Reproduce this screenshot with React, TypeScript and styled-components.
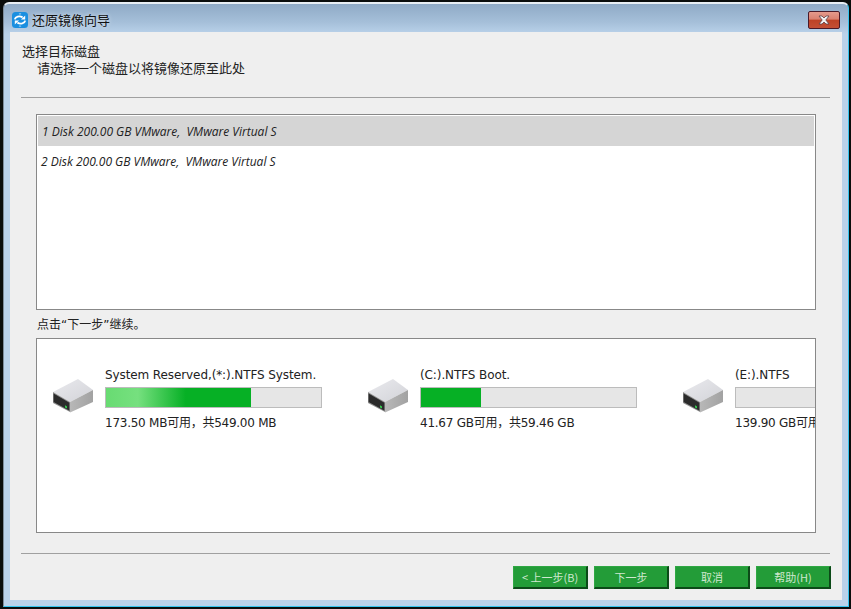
import React from "react";
import styled, { createGlobalStyle } from "styled-components";

const GlobalStyle = createGlobalStyle`
  html, body {
    margin: 0;
    padding: 0;
    background: #0a0d0c;
  }
  * {
    box-sizing: border-box;
  }
`;

const Desktop = styled.div`
  width: 851px;
  height: 609px;
  padding: 2px 2px 2px 3px;
  background: #0a0d0c;
  overflow: hidden;
  font-family: "DejaVu Sans", "Noto Sans CJK SC", sans-serif;
  font-size: 12px;
  color: #222;
`;

const Frame = styled.div`
  width: 846px;
  height: 605px;
  display: flex;
  flex-direction: column;
  padding: 0 6px 6px 6px;
  border-radius: 6px 6px 0 0;
  border-top: 2px solid #e8eef4;
  border-right: 1px solid #35c4ee;
  border-bottom: 1px solid #35c4ee;
  border-left: 1px solid #7d8d9c;
  background: linear-gradient(180deg, #8faac6 0px, #a5bfd9 18px, #bad2ea 30px, #bad2ea 100%);
`;

const TitleBar = styled.div`
  height: 28px;
  flex: none;
  display: flex;
  align-items: center;
  gap: 4px;
  padding: 4px 0 0 2px;
`;

const AppIcon = styled.svg`
  width: 16px;
  height: 16px;
  flex: none;
`;

const Title = styled.div`
  flex: 1;
  font-family: "Noto Sans CJK SC", sans-serif;
  font-size: 13px;
  line-height: 16px;
  color: #111;
  text-shadow: 0 0 4px rgba(255, 255, 255, 0.7);
`;

const CloseButton = styled.div`
  width: 32px;
  height: 18px;
  margin-right: 2px;
  display: flex;
  align-items: center;
  justify-content: center;
  border: 1px solid #4a1a28;
  border-radius: 2px;
  background: linear-gradient(180deg, #e59a8c 0%, #d9806f 45%, #bd4226 50%, #c34f35 100%);
`;

const Panel = styled.div`
  flex: 1;
  display: flex;
  flex-direction: column;
  background: #efefef;
  padding: 10px 11px 0;
`;

const Heading = styled.div`
  font-family: "Noto Sans CJK SC", sans-serif;
  font-size: 13px;
  line-height: 17px;
  padding-left: 1px;
`;

const SubHeading = styled(Heading)`
  padding-left: 16px;
`;

const Divider = styled.div`
  height: 1px;
  flex: none;
  width: 809px;
  background: #a0a0a0;
`;

const TopDivider = styled(Divider)`
  margin-top: 21px;
`;

const BottomDivider = styled(Divider)`
  margin-top: 20px;
`;

const DiskList = styled.div`
  width: 780px;
  height: 196px;
  flex: none;
  margin: 16px 0 0 15px;
  padding: 1px;
  background: #fff;
  border: 1px solid #888;
`;

const DiskRow = styled.div<{ $selected?: boolean }>`
  height: 30px;
  display: flex;
  align-items: center;
  padding-left: ${(p) => (p.$selected ? "4px" : "3px")};
  background: ${(p) => (p.$selected ? "#d5d5d5" : "#fff")};
  font-family: "Open Sans", sans-serif;
  font-style: italic;
  font-size: 12px;
  white-space: pre;
  color: #222;
`;

const Hint = styled.div`
  font-family: "DejaVu Sans", "Noto Sans CJK SC", sans-serif;
  font-size: 12px;
  line-height: 26px;
  padding: 2px 0 0 16px;
`;

const VolumeBox = styled.div`
  width: 780px;
  height: 195px;
  flex: none;
  margin-left: 15px;
  padding: 28px 0 0 15px;
  display: flex;
  background: #fff;
  border: 1px solid #888;
  overflow: hidden;
`;

const Volume = styled.div`
  width: 315px;
  flex: none;
  display: flex;
  gap: 9px;
`;

const DriveIcon = styled.svg`
  width: 44px;
  height: 36px;
  flex: none;
  margin-top: 11px;
`;

const VolumeInfo = styled.div`
  width: 217px;
  flex: none;
`;

const VolumeName = styled.div`
  height: 20px;
  line-height: 16px;
  white-space: nowrap;
  letter-spacing: -0.1px;
`;

const Bar = styled.div`
  height: 21px;
  background: #e6e6e6;
  border: 1px solid #bcbcbc;
`;

const BarFill = styled.div<{ $glow?: boolean }>`
  height: 100%;
  background: ${(p) =>
    p.$glow ? "linear-gradient(90deg, #68db72 0%, #76e07f 22%, #06b025 55%, #06b025 100%)" : "#06b025"};
`;

const VolumeSize = styled.div`
  margin-top: 7px;
  line-height: 17px;
  white-space: nowrap;
  letter-spacing: -0.25px;
`;

const Footer = styled.div`
  display: flex;
  justify-content: flex-end;
  gap: 6px;
  margin-top: 12px;
`;

const WizardButton = styled.div`
  width: 75px;
  height: 23px;
  display: flex;
  align-items: center;
  justify-content: center;
  font-family: "Noto Sans CJK SC", sans-serif;
  font-size: 11px;
  color: #cfe8cf;
  background: #239c38;
  border-top: 1px solid #2fa743;
  border-left: 1px solid #2fa743;
  border-right: 2px solid #0c4a18;
  border-bottom: 2px solid #0c4a18;
`;

function Logo() {
  return (
    <AppIcon viewBox="0 0 16 16">
      <rect x="0" y="0" width="16" height="16" rx="3.5" fill="#1a8fe0" />
      <path d="M2.8 7.4C3.4 4.6 7.4 3.4 10.6 5.4" fill="none" stroke="#fff" strokeWidth="1.9" />
      <path d="M13.2 3.4v4H9z" fill="#fff" />
      <path d="M13.2 8.6C12.6 11.4 8.6 12.6 5.4 10.6" fill="none" stroke="#fff" strokeWidth="1.9" />
      <path d="M2.8 12.6v-4H7z" fill="#fff" />
      <path d="M6.6 1.4h2.8L8 2.8zM6.6 14.6h2.8L8 13.2z" fill="#bfe2fa" />
    </AppIcon>
  );
}

function Drive({ id }: { id: number }) {
  return (
    <DriveIcon viewBox="0 0 44 36">
      <defs>
        <linearGradient id={`top${id}`} x1="0" y1="0" x2="1" y2="1">
          <stop offset="0" stopColor="#eaeaee" />
          <stop offset="1" stopColor="#d2d3d8" />
        </linearGradient>
        <linearGradient id={`side${id}`} x1="0" y1="0" x2="1" y2="0">
          <stop offset="0" stopColor="#b8b8b8" />
          <stop offset="1" stopColor="#a2a2a2" />
        </linearGradient>
      </defs>
      <path d="M1 14 26 1l15 11-23 12z" fill={`url(#top${id})`} />
      <path d="M1 14 18 24v10L1 25z" fill="#8f8f8f" />
      <path d="M1.6 15.4 17.4 24.8v8L1.6 24z" fill="#2b2b2b" />
      <path d="M18 24 41 12v12L18 34.5z" fill={`url(#side${id})`} />
      <path d="M13 27.2l2 1.2v2.2l-2-1.2z" fill="#35d050" />
    </DriveIcon>
  );
}

const volumes = [
  { name: "System Reserved,(*:).NTFS System.", size: "173.50 MB可用，共549.00 MB", used: 145, glow: true },
  { name: "(C:).NTFS Boot.", size: "41.67 GB可用，共59.46 GB", used: 60, glow: false },
  { name: "(E:).NTFS", size: "139.90 GB可用，共200.00 GB", used: 0, glow: false },
];

export default function App() {
  return (
    <Desktop>
      <GlobalStyle />
      <Frame>
        <TitleBar>
          <Logo />
          <Title>还原镜像向导</Title>
          <CloseButton>
            <svg width="14" height="10" viewBox="0 0 14 10">
              <path
                d="M2 1h3l2 2 2-2h3L8.8 5 12 9H9L7 7 5 9H2l3.2-4z"
                fill="#f4f4f4"
                stroke="#5a4048"
                strokeWidth="0.8"
              />
            </svg>
          </CloseButton>
        </TitleBar>
        <Panel>
          <Heading>选择目标磁盘</Heading>
          <SubHeading>请选择一个磁盘以将镜像还原至此处</SubHeading>
          <TopDivider />
          <DiskList>
            <DiskRow $selected>1 Disk 200.00 GB VMware,  VMware Virtual S</DiskRow>
            <DiskRow>2 Disk 200.00 GB VMware,  VMware Virtual S</DiskRow>
          </DiskList>
          <Hint>点击“下一步”继续。</Hint>
          <VolumeBox>
            {volumes.map((v, i) => (
              <Volume key={v.name}>
                <Drive id={i} />
                <VolumeInfo>
                  <VolumeName>{v.name}</VolumeName>
                  <Bar>
                    <BarFill $glow={v.glow} style={{ width: v.used }} />
                  </Bar>
                  <VolumeSize>{v.size}</VolumeSize>
                </VolumeInfo>
              </Volume>
            ))}
          </VolumeBox>
          <BottomDivider />
          <Footer>
            <WizardButton>&lt; 上一步(B)</WizardButton>
            <WizardButton>下一步</WizardButton>
            <WizardButton>取消</WizardButton>
            <WizardButton>帮助(H)</WizardButton>
          </Footer>
        </Panel>
      </Frame>
    </Desktop>
  );
}
